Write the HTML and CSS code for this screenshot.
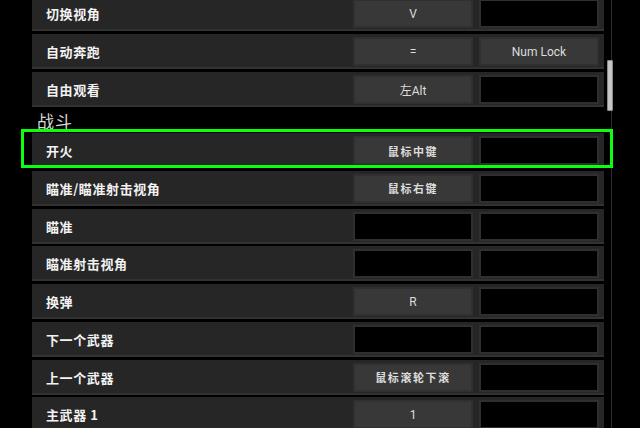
FILE: index.html
```html
<!DOCTYPE html>
<html lang="zh">
<head>
  <meta charset="UTF-8">
  <title>按键设置</title>
  <link rel="stylesheet" href="styles.css">
</head>
<body>
  <div class="screen">
    <div class="lista">
      <div class="fila">
        <span class="nombre">切换视角</span>
        <span class="tecla">V</span>
        <span class="tecla vacia"></span>
      </div>
      <div class="fila">
        <span class="nombre">自动奔跑</span>
        <span class="tecla">=</span>
        <span class="tecla">Num Lock</span>
      </div>
      <div class="fila">
        <span class="nombre">自由观看</span>
        <span class="tecla">左Alt</span>
        <span class="tecla vacia"></span>
      </div>

      <h2 class="grupo">战斗</h2>

      <div class="fila activa">
        <span class="nombre">开火</span>
        <span class="tecla cjk">鼠标中键</span>
        <span class="tecla vacia"></span>
      </div>
      <div class="fila">
        <span class="nombre">瞄准/瞄准射击视角</span>
        <span class="tecla cjk">鼠标右键</span>
        <span class="tecla vacia"></span>
      </div>
      <div class="fila">
        <span class="nombre">瞄准</span>
        <span class="tecla vacia"></span>
        <span class="tecla vacia"></span>
      </div>
      <div class="fila">
        <span class="nombre">瞄准射击视角</span>
        <span class="tecla vacia"></span>
        <span class="tecla vacia"></span>
      </div>
      <div class="fila">
        <span class="nombre">换弹</span>
        <span class="tecla">R</span>
        <span class="tecla vacia"></span>
      </div>
      <div class="fila">
        <span class="nombre">下一个武器</span>
        <span class="tecla vacia"></span>
        <span class="tecla vacia"></span>
      </div>
      <div class="fila">
        <span class="nombre">上一个武器</span>
        <span class="tecla cjk">鼠标滚轮下滚</span>
        <span class="tecla vacia"></span>
      </div>
      <div class="fila">
        <span class="nombre">主武器 1</span>
        <span class="tecla">1</span>
        <span class="tecla vacia"></span>
      </div>
    </div>

    <div class="scroll">
      <div class="thumb"></div>
    </div>
  </div>
</body>
</html>
```

FILE: styles.css
```css
html, body {
  margin: 0;
  height: 100%;
  overflow: hidden;
  background: #000;
}
body {
  font-family: Roboto, "Noto Sans CJK SC", sans-serif;
  color: #e6e6e6;
}
.screen {
  display: flex;
  height: 428px;
}
.lista {
  width: 572px;
  margin-left: 32px;
  margin-top: -3.75px;
}
.fila {
  position: relative;
  display: flex;
  align-items: center;
  gap: 6px;
  height: 35px;
  box-sizing: border-box;
  padding: 3px 5px 1px 0;
  margin-bottom: 2.75px;
  background: #262626;
  border-bottom: 2px solid #323232;
}
.nombre {
  flex: 1;
  padding-left: 14px;
  font-family: "Noto Sans CJK SC", sans-serif;
  font-weight: bold;
  font-size: 13px;
  letter-spacing: 0.6px;
  color: #f2f2f2;
}
.tecla {
  width: 120px;
  height: 29px;
  box-sizing: border-box;
  display: flex;
  align-items: center;
  justify-content: center;
  background: #383838;
  border: 2px solid #303030;
  font-size: 12px;
  color: #dcdcdc;
}
.tecla.vacia {
  background: #000;
  border-color: #2f2f2f;
}
.tecla.cjk {
  font-family: "Noto Sans CJK SC", sans-serif;
  font-weight: bold;
  font-size: 11px;
  letter-spacing: 1.6px;
}
.grupo {
  margin: 0;
  height: 23.5px;
  line-height: 22px;
  padding-left: 5px;
  font-family: "Noto Sans CJK SC", sans-serif;
  font-weight: normal;
  font-size: 17px;
  letter-spacing: 1px;
  color: #d8d8d8;
}
/* resaltado verde sobre la fila */
.fila.activa::after {
  content: "";
  position: absolute;
  left: -11px;
  right: -9px;
  top: -4px;
  bottom: -2px;
  border: 3px solid #0cff0c;
  z-index: 2;
}
.scroll {
  width: 6px;
  margin-left: 3px;
  background: linear-gradient(to right, transparent 4px, #2c2c2c 4px, #2c2c2c 5px, transparent 5px);
}
.thumb {
  margin-top: 60px;
  height: 51px;
  box-sizing: border-box;
  background: #c6c6c6;
  border: 1px solid #8a8a8a;
  border-radius: 1px;
}
```
